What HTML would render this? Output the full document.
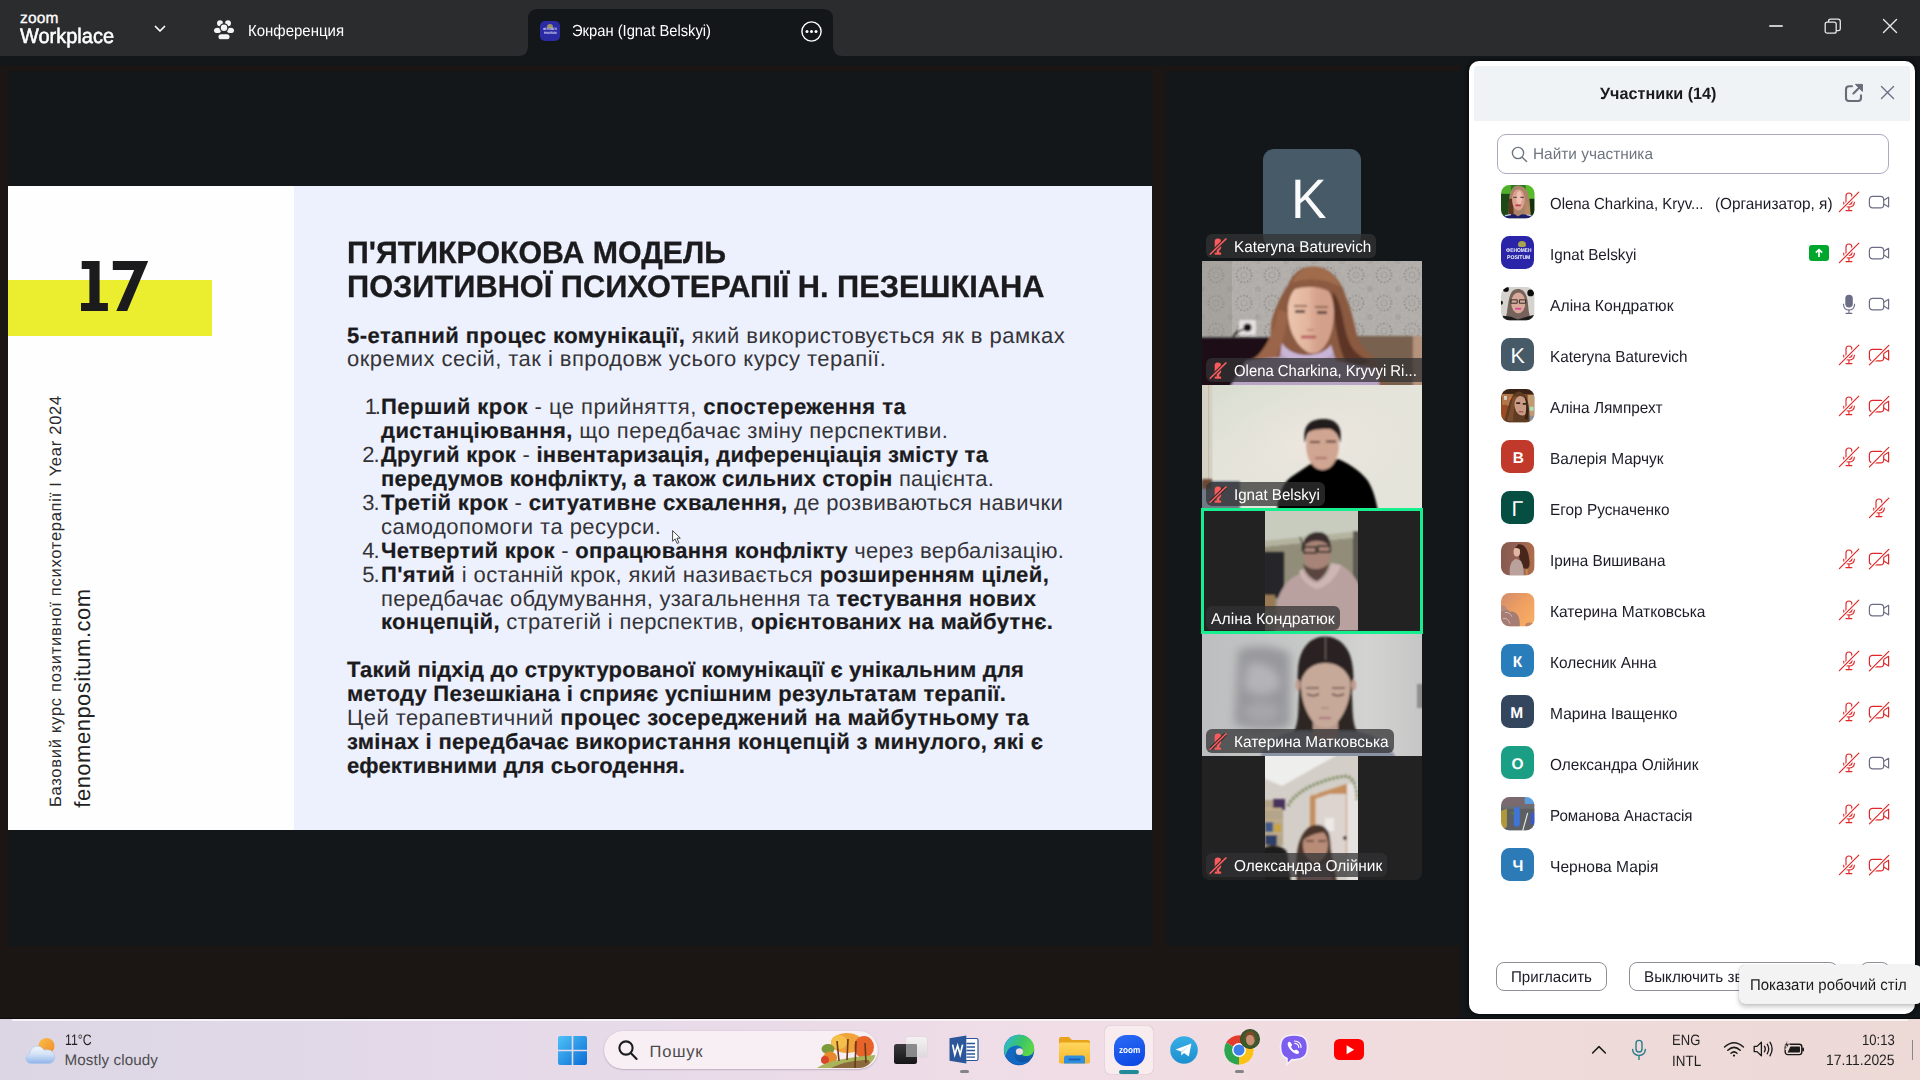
<!DOCTYPE html>
<html><head><meta charset="utf-8"><title>Zoom</title>
<style>
html,body{margin:0;padding:0;}
body{width:1920px;height:1080px;overflow:hidden;position:relative;background:#13171a;font-family:"Liberation Sans",sans-serif;}
.a{position:absolute;}
.t{position:absolute;white-space:nowrap;line-height:1;text-rendering:geometricPrecision;}
.t b{font-weight:bold;color:var(--bc,inherit);-webkit-text-stroke:var(--bs,0);}
svg{position:absolute;overflow:visible;}
</style></head><body>
<div class="a" style="left:0px;top:0px;width:1920px;height:56px;background:#2b2c2e;"></div>
<div class="a" style="left:0px;top:66px;width:1460px;height:953px;background:#1b1613;"></div>
<div class="a" style="left:8px;top:71px;width:1144px;height:875px;background:#13171a;"></div>
<div class="a" style="left:1166px;top:71px;width:294px;height:875px;background:#13171a;"></div>
<svg style="left:517.8px;top:9px" width="325" height="47" viewBox="0 0 325 47"><path d="M0 47 Q10 47 10 37 L10 10 Q10 0 20 0 L305 0 Q315 0 315 10 L315 37 Q315 47 325 47 Z" fill="#13171a"/></svg>
<svg style="left:154px;top:25px" width="12" height="9" viewBox="0 0 12 9"><path d="M1.5 1.5 L6 6 L10.5 1.5" fill="none" stroke="#fff" stroke-width="1.7" stroke-linecap="round" stroke-linejoin="round"/></svg>
<svg style="left:214px;top:20px" width="20" height="20" viewBox="0 0 20 20" fill="#f4f4f4">
<circle cx="6" cy="3.3" r="3"/><circle cx="14" cy="3.3" r="3"/>
<ellipse cx="3.5" cy="10.4" rx="3.5" ry="2.7"/><ellipse cx="16.5" cy="10.4" rx="3.5" ry="2.7"/>
<circle cx="10" cy="7.7" r="3.9" stroke="#2b2c2f" stroke-width="1.3"/>
<rect x="3.9" y="13.6" width="12.2" height="6.2" rx="3.1" stroke="#2b2c2f" stroke-width="1.1"/>
</svg>
<div class="a" style="left:540px;top:21px;width:20px;height:20px;border-radius:5px;background:#2b2aa5"></div>
<div class="a" style="left:547px;top:23.5px;width:6px;height:4.5px;border-radius:3px 3px 1px 1px;background:#9a9560"></div>
<svg style="left:800.4px;top:19.5px" width="23" height="23" viewBox="0 0 23 23"><circle cx="11.5" cy="11.5" r="9.6" fill="none" stroke="#fff" stroke-width="1.4"/><circle cx="7" cy="11.5" r="1.5" fill="#fff"/><circle cx="11.5" cy="11.5" r="1.5" fill="#fff"/><circle cx="16" cy="11.5" r="1.5" fill="#fff"/></svg>
<div class="a" style="left:1769px;top:25px;width:14px;height:1.9px;border-radius:1px;background:#c9c9c9"></div>
<svg style="left:1824px;top:18px" width="18" height="17" viewBox="0 0 18 17" fill="none" stroke="#e8e8e8" stroke-width="1.3"><rect x="1.2" y="4.2" width="11" height="11" rx="2"/><path d="M4.5 4 V3.2 Q4.5 1.2 6.5 1.2 H14 Q16.3 1.2 16.3 3.5 V10.8 Q16.3 12.6 14.6 12.6 H12.4"/></svg>
<svg style="left:1882px;top:18px" width="16" height="16" viewBox="0 0 16 16" stroke="#e8e8e8" stroke-width="1.4" stroke-linecap="round"><path d="M1.5 1.5 L14.5 14.5 M14.5 1.5 L1.5 14.5"/></svg>
<div class="a" style="left:8px;top:186px;width:286px;height:644px;background:#fefefe;"></div>
<div class="a" style="left:294px;top:186px;width:858px;height:644px;background:#edf0fd;"></div>
<div class="a" style="left:8px;top:280px;width:204px;height:56px;background:#ebed2f;"></div>
<svg style="left:0;top:0" width="300" height="400" viewBox="0 0 300 400" fill="#1b1b1d">
<path d="M81.7 261.1 H99.6 V303.1 H107.9 V310.9 H81 V303.1 H89.4 V269.1 H81.7 Z"/>
<path d="M112.8 261.1 H148.2 L127.2 310.9 H116.3 L134.2 270.1 H112.8 Z"/>
</svg>
<svg style="left:672px;top:530px" width="10" height="15" viewBox="0 0 10 15"><path d="M0.6 0.6 L0.6 11.2 L3.1 8.9 L5.1 13.4 L6.9 12.6 L4.9 8.2 L8.3 8.2 Z" fill="#fff" stroke="#333" stroke-width="0.9"/></svg>
<div class="a" style="left:1263px;top:149px;width:98px;height:98px;border-radius:11px;background:#465a68"></div>
<svg style="left:1202px;top:261px;" width="220" height="124" viewBox="0 0 220 124"><defs><filter id="b2" x="-10%" y="-10%" width="120%" height="120%"><feGaussianBlur stdDeviation="1"/></filter><clipPath id="c2"><rect x="0" y="0" width="220" height="124"/></clipPath></defs>
<filter id="nz2" x="0" y="0" width="100%" height="100%"><feTurbulence type="fractalNoise" baseFrequency="0.3" numOctaves="2" seed="7"/><feColorMatrix values="0 0 0 0 0.42  0 0 0 0 0.40  0 0 0 0 0.39  2.6 2.6 2.6 0 -3.55"/></filter>
<g clip-path="url(#c2)"><rect width="220" height="124" fill="#b4b1ad"/>
<pattern id="wp" width="28" height="28" patternUnits="userSpaceOnUse"><circle cx="14" cy="14" r="7.5" fill="none" stroke="#8d8986" stroke-width="2.2" stroke-dasharray="2 1.4"/><circle cx="14" cy="14" r="3" fill="none" stroke="#9a9693" stroke-width="1.2"/><circle cx="0" cy="0" r="3" fill="#a09c99"/><circle cx="28" cy="28" r="3" fill="#a09c99"/><circle cx="28" cy="0" r="3" fill="#a09c99"/><circle cx="0" cy="28" r="3" fill="#a09c99"/></pattern>
<rect width="220" height="78" fill="url(#wp)" opacity="0.7"/>
<rect width="220" height="78" filter="url(#nz2)" opacity="0.75"/>
<rect x="0" y="0" width="30" height="78" fill="#8f8b88" opacity="0.35"/>
<g filter="url(#b2)">
<rect x="37" y="59" width="17" height="15" rx="2" fill="#e4e2e0"/><circle cx="45.5" cy="66.5" r="4" fill="#141012"/><path d="M31 76 Q35 69 44 68" stroke="#141012" stroke-width="1.6" fill="none"/>
<rect x="-2" y="76.5" width="70" height="50" fill="#1a1113"/>
<rect x="150" y="75" width="75" height="52" fill="#78624f"/><rect x="211" y="75" width="12" height="52" fill="#b4927b"/>
<path d="M112 5.5 C98 5 90 14 86 24 C78 36 74 46 70 58 C68 68 70 76 66 84 C62 92 54 96 46 100 L40 126 L184 126 L174 98 C166 92 158 84 155 74 C152 62 150 50 144 36 C140 22 130 6 112 5.5Z" fill="#8b5a41"/>
<path d="M112 6 C124 6 134 14 138 26 C126 18 104 16 90 22 C94 12 102 6 112 6Z" fill="#a06c4c"/>
<path d="M130 30 C140 40 140 60 146 78 C150 90 158 96 168 100 L150 110 C138 98 132 64 130 30Z" fill="#5d3628"/>
<path d="M76 48 C72 72 64 88 50 100 L68 104 C80 90 84 70 86 52Z" fill="#9a6548"/>
<path d="M109 21 C94 21 86 34 86 50 C86 66 92 82 104 90 C108 93 114 93 118 90 C128 82 132 66 132 50 C132 34 124 21 109 21Z" fill="#d3a08b"/>
<linearGradient id="fc2" x1="0" x2="1"><stop offset="0" stop-color="#ecc6ae"/><stop offset="0.45" stop-color="#e2b49d"/><stop offset="0.75" stop-color="#d3a08b" stop-opacity="0"/></linearGradient><path d="M109 21 C94 21 86 34 86 50 C86 66 92 82 104 90 C108 93 114 93 118 90 C128 82 132 66 132 50 C132 34 124 21 109 21Z" fill="url(#fc2)"/>
<path d="M88 30 C94 18 124 16 132 34 C122 24 100 24 88 30Z" fill="#8b5a41"/>
<path d="M92 45 h13 M113 46 h13" stroke="#7a5444" stroke-width="1.4"/>
<path d="M93 50.5 h10 M115 51.5 h10" stroke="#4d3a36" stroke-width="2.6"/>
<path d="M105 69 h7" stroke="#b98572" stroke-width="1.6"/>
<path d="M99 76 h15" stroke="#b4545e" stroke-width="2.6"/>
<path d="M80 82 C90 98 118 98 129 84 L134 100 L174 108 L178 126 L28 126 L44 100 L78 96Z" fill="#b9a4c6"/>
<path d="M80 82 C90 98 118 98 129 84 L131 92 C118 104 90 104 79 92Z" fill="#c9b6d6"/>
</g></g></svg>
<svg style="left:1202px;top:385px;" width="220" height="124" viewBox="0 0 220 124"><defs><filter id="b3" x="-10%" y="-10%" width="120%" height="120%"><feGaussianBlur stdDeviation="1"/></filter><clipPath id="c3"><rect x="0" y="0" width="220" height="124"/></clipPath></defs>
<g clip-path="url(#c3)"><rect width="220" height="124" fill="#e5e4da"/>
<radialGradient id="g3" cx="0.5" cy="0.45" r="0.5"><stop offset="0" stop-color="#efe6e0"/><stop offset="1" stop-color="#e5e4da" stop-opacity="0"/></radialGradient>
<rect width="220" height="124" fill="url(#g3)"/>
<linearGradient id="g3b" x1="0" y1="0" x2="1" y2="1"><stop offset="0" stop-color="#d6dccf"/><stop offset="0.5" stop-color="#e5e4da" stop-opacity="0"/></linearGradient>
<rect width="220" height="124" fill="url(#g3b)"/>
<rect x="0" y="0" width="10.5" height="124" fill="#d5d2c3"/><rect x="6" y="0" width="1.2" height="100" fill="#c2bfb0"/>
<g filter="url(#b3)">
<rect x="-2" y="96" width="40" height="30" fill="#6f7a86"/><rect x="0" y="94" width="10" height="10" fill="#6b4a35"/>
<path d="M75 126 C77 106 82 96 92 90 L110 78 L136 74 C150 80 160 88 166 96 C172 106 174 116 176 126Z" fill="#040404"/>
<ellipse cx="120.5" cy="61" rx="16.3" ry="24" fill="#d0a591"/>
<path d="M103 58 C100 40 108 34 122 34 C136 34 141 44 138 58 C136 50 134 46 128 44 C118 44 110 44 106 48 C104 52 104 56 103 58Z" fill="#221e1f"/>
<path d="M108 57 h10 M124 56.5 h10" stroke="#5b4038" stroke-width="1.8"/>
<path d="M113 73 h12" stroke="#a8655e" stroke-width="1.6"/>
</g></g></svg>
<div class="a" style="left:1201px;top:508px;width:222px;height:126px;background:#222223;box-sizing:border-box;border:3.4px solid #17ef8e"></div>
<svg style="left:1265px;top:511.4px;" width="93" height="119.2" viewBox="0 0 93 119.2"><defs><filter id="b4" x="-10%" y="-10%" width="120%" height="120%"><feGaussianBlur stdDeviation="0.9"/></filter><clipPath id="c4"><rect x="0" y="0" width="93" height="119.2"/></clipPath></defs>
<g clip-path="url(#c4)"><rect width="93" height="120" fill="#918d78"/>
<g filter="url(#b4)">
<path d="M-2 -2 H95 V26 L-2 36Z" fill="#c8ccbf"/>
<path d="M-2 30 L95 20 V26 L-2 36Z" fill="#b4b39f"/>
<rect x="88" y="20" width="7" height="60" fill="#5b5a52"/>
<rect x="-2" y="41" width="21" height="46" fill="#28282a"/><rect x="-2" y="84" width="12" height="14" fill="#9a7a55"/>
<path d="M35 26 l3 8 l-1 6" stroke="#2d2d2d" stroke-width="1.2" fill="none"/>
<ellipse cx="52" cy="43" rx="13.5" ry="18" fill="#a78477"/>
<path d="M38 40 C36 26 46 20 54 21 C62 21 66 28 65 36 C60 28 46 28 40 34Z" fill="#3a2f2f"/>
<path d="M39 36 h12 v6 h-12z M53 35 h12 v6 h-12z" fill="none" stroke="#1f1c1c" stroke-width="1.3"/>
<path d="M38 58 L38 62 C28 64 18 72 12 90 L10 122 L95 122 L95 76 C90 64 82 58 76 54 L66 52 C64 62 58 68 52 70 C46 68 40 62 38 58Z" fill="#b9a1a0"/>
<path d="M38 58 C40 68 48 72 52 72 C58 70 64 62 66 52 L76 54 C72 66 62 76 52 78 C44 76 36 68 34 60Z" fill="#cdb6b4"/>
<path d="M38 52 C40 62 46 68 52 70 C58 66 62 60 64 52 C58 60 44 60 38 52Z" fill="#5a4540"/>
</g></g></svg>
<svg style="left:1202px;top:634px;" width="220" height="122" viewBox="0 0 220 122"><defs><filter id="b5" x="-10%" y="-10%" width="120%" height="120%"><feGaussianBlur stdDeviation="1.3"/></filter><clipPath id="c5"><rect x="0" y="0" width="220" height="122"/></clipPath></defs>
<filter id="b5x" x="-20%" y="-20%" width="140%" height="140%"><feGaussianBlur stdDeviation="5"/></filter>
<g clip-path="url(#c5)"><rect width="220" height="122" fill="#c6c7c7"/>
<linearGradient id="g5" x1="0" x2="1"><stop offset="0" stop-color="#bdbebf"/><stop offset="0.45" stop-color="#c6c7c7"/><stop offset="0.75" stop-color="#d3d3d2"/><stop offset="1" stop-color="#c6c6c6"/></linearGradient>
<rect width="220" height="122" fill="url(#g5)"/>
<g filter="url(#b5x)">
<path d="M36 16 C50 10 78 12 88 20 L88 92 C70 98 44 96 32 90Z" fill="#98989c"/>
<path d="M46 30 C62 26 78 36 78 52 C70 62 50 64 42 52Z" fill="#b4b4b8"/>
<ellipse cx="60" cy="78" rx="18" ry="10" fill="#a6a6aa"/>
</g>
<g filter="url(#b5)">
<rect x="215" y="50" width="8" height="24" fill="#8e8e8e"/>
<path d="M123 2.5 C105 3 97 18 96 36 C95 46 96 52 97 58 L150 58 C151 52 152 46 151 36 C150 18 141 3 123 2.5Z" fill="#2a2421"/>
<path d="M98 52 C95 70 99 88 90 101 L114 101 L108 70Z" fill="#2d2623"/>
<path d="M149 52 C152 70 148 88 157 101 L133 101 L139 70Z" fill="#2d2623"/>
<path d="M58 126 C60 108 76 100 96 97 L150 97 C172 100 190 108 194 126Z" fill="#8a93a3"/>
<rect x="111" y="88" width="25" height="18" fill="#b5988b"/>
<ellipse cx="96" cy="51" rx="2.6" ry="5.5" fill="#c09c8d"/><ellipse cx="151.5" cy="51" rx="2.6" ry="5.5" fill="#c09c8d"/>
<path d="M123.5 22 C110 23 99.5 33 99 49 C98.5 63 103 79 113 90 C117 95 130 95 134 90 C144 79 149 63 148.5 49 C148 33 137 23 123.5 22Z" fill="#c7a999"/>
<path d="M99 47 C100 30 112 21 123.5 21 C135 21 147 30 148.5 47 C144 34 134 29 123.5 29 C113 29 103 34 99 47Z" fill="#2a2421"/>
<path d="M123.5 3 V26" stroke="#7a6a64" stroke-width="0.9"/>
<path d="M105 60 q6 3.4 12 0 M130 60 q6 3.4 12 0" stroke="#5a463f" stroke-width="1.6" fill="none"/>
<path d="M104 54 h13 M130 54 h13" stroke="#6a544b" stroke-width="1.3"/>
<path d="M119 74 h8" stroke="#a98c80" stroke-width="1.6"/>
<path d="M117 84 h12" stroke="#a9777a" stroke-width="2.2"/>
</g></g></svg>
<div class="a" style="left:1202px;top:756px;width:220px;height:124px;background:#222223;border-radius:0 0 7px 7px"></div>
<svg style="left:1265px;top:756px;" width="93" height="124" viewBox="0 0 93 124"><defs><filter id="b6" x="-10%" y="-10%" width="120%" height="120%"><feGaussianBlur stdDeviation="0.8"/></filter><clipPath id="c6"><rect x="0" y="0" width="93" height="124"/></clipPath></defs>
<g clip-path="url(#c6)"><rect width="93" height="124" fill="#d3cec7"/>
<g filter="url(#b6)">
<path d="M-2 -2 H74 L17 30 L-2 22Z" fill="#eeeeed"/>
<path d="M45 40 L82 28 L82 100 L45 100Z" fill="#c58f5d"/>
<rect x="50.5" y="38" width="30.5" height="62" fill="#ddd4cf"/>
<path d="M45 41 L82 28 L82 32 L50 43Z" fill="#c58f5d"/>
<rect x="82" y="28" width="13" height="98" fill="#e6e2df"/>
<rect x="60" y="62" width="9" height="13" fill="#ece9e6"/>
<circle cx="80" cy="82" r="2" fill="#222"/>
<path d="M23 50 C30 34 60 22 82 20 C90 24 92 32 92 44" stroke="#7f8c63" stroke-width="3.2" fill="none" stroke-dasharray="2.5 1.6"/>
<rect x="-2" y="44" width="20" height="46" fill="#b3a48a"/>
<rect x="8" y="43" width="12" height="11" fill="#47325c"/>
<rect x="0" y="66" width="8" height="10" fill="#3f5a86"/><rect x="9" y="68" width="7" height="8" fill="#c9a33f"/>
<rect x="0" y="79" width="12" height="10" fill="#2d3f6b"/><rect x="0" y="52" width="17" height="2" fill="#c9b38f"/><rect x="0" y="64" width="17" height="1.6" fill="#c9b38f"/><rect x="0" y="77" width="17" height="1.6" fill="#c9b38f"/>
<path d="M-2 126 V92 C4 88 16 88 22 96 L26 126Z" fill="#1d1d1f"/>
<path d="M32 126 C30 100 32 78 46 70 C56 66 64 72 65 82 C66 96 68 110 72 126Z" fill="#49342c"/>
<ellipse cx="50.5" cy="89" rx="12.5" ry="17" fill="#b98c78"/>
<path d="M38 84 C40 72 52 68 62 76 C56 76 46 78 38 84Z" fill="#49342c"/>
<path d="M41 85 h8 M53 85 h8" stroke="#4e3730" stroke-width="1.6"/>
<path d="M40 104 C46 110 56 110 62 104 L68 126 L34 126Z" fill="#5b4a4a"/>
</g></g></svg>
<div class="a" style="left:1206px;top:233.5px;width:170px;height:24.5px;border-radius:6px;background:rgba(50,50,51,0.74)"></div>
<svg style="left:1206px;top:233.5px" width="24" height="24.5" viewBox="0 0 24 24.5"><g fill="#fd5a5b"><rect x="8.7" y="4.4" width="6.4" height="12" rx="3.1"/><rect x="10.7" y="16" width="2.5" height="3"/><rect x="8.7" y="18.6" width="6.4" height="2.1"/></g><path d="M4.6 19.8 L19.6 5.2" stroke="#2b2c2d" stroke-width="3.6"/><path d="M4.2 20.2 L20 4.9" stroke="#fd5a5b" stroke-width="1.5" stroke-linecap="round"/></svg>
<div class="a" style="left:1206px;top:357.5px;width:216px;height:24.5px;border-radius:6px 0 0 6px;background:rgba(50,50,51,0.74)"></div>
<svg style="left:1206px;top:357.5px" width="24" height="24.5" viewBox="0 0 24 24.5"><g fill="#fd5a5b"><rect x="8.7" y="4.4" width="6.4" height="12" rx="3.1"/><rect x="10.7" y="16" width="2.5" height="3"/><rect x="8.7" y="18.6" width="6.4" height="2.1"/></g><path d="M4.6 19.8 L19.6 5.2" stroke="#2b2c2d" stroke-width="3.6"/><path d="M4.2 20.2 L20 4.9" stroke="#fd5a5b" stroke-width="1.5" stroke-linecap="round"/></svg>
<div class="a" style="left:1206px;top:481.5px;width:119px;height:24.5px;border-radius:6px;background:rgba(50,50,51,0.74)"></div>
<svg style="left:1206px;top:481.5px" width="24" height="24.5" viewBox="0 0 24 24.5"><g fill="#fd5a5b"><rect x="8.7" y="4.4" width="6.4" height="12" rx="3.1"/><rect x="10.7" y="16" width="2.5" height="3"/><rect x="8.7" y="18.6" width="6.4" height="2.1"/></g><path d="M4.6 19.8 L19.6 5.2" stroke="#2b2c2d" stroke-width="3.6"/><path d="M4.2 20.2 L20 4.9" stroke="#fd5a5b" stroke-width="1.5" stroke-linecap="round"/></svg>
<div class="a" style="left:1206px;top:605.5px;width:133.5px;height:24.5px;border-radius:6px;background:rgba(50,50,51,0.74)"></div>
<div class="a" style="left:1206px;top:728.7px;width:188px;height:24.5px;border-radius:6px;background:rgba(50,50,51,0.74)"></div>
<svg style="left:1206px;top:728.7px" width="24" height="24.5" viewBox="0 0 24 24.5"><g fill="#fd5a5b"><rect x="8.7" y="4.4" width="6.4" height="12" rx="3.1"/><rect x="10.7" y="16" width="2.5" height="3"/><rect x="8.7" y="18.6" width="6.4" height="2.1"/></g><path d="M4.6 19.8 L19.6 5.2" stroke="#2b2c2d" stroke-width="3.6"/><path d="M4.2 20.2 L20 4.9" stroke="#fd5a5b" stroke-width="1.5" stroke-linecap="round"/></svg>
<div class="a" style="left:1206px;top:852.8px;width:180.7px;height:24.5px;border-radius:6px;background:rgba(50,50,51,0.74)"></div>
<svg style="left:1206px;top:852.8px" width="24" height="24.5" viewBox="0 0 24 24.5"><g fill="#fd5a5b"><rect x="8.7" y="4.4" width="6.4" height="12" rx="3.1"/><rect x="10.7" y="16" width="2.5" height="3"/><rect x="8.7" y="18.6" width="6.4" height="2.1"/></g><path d="M4.6 19.8 L19.6 5.2" stroke="#2b2c2d" stroke-width="3.6"/><path d="M4.2 20.2 L20 4.9" stroke="#fd5a5b" stroke-width="1.5" stroke-linecap="round"/></svg>
<div class="a" style="left:1469px;top:61px;width:446px;height:953px;border-radius:10px;background:#fff;box-shadow:0 0 4px 1px rgba(0,0,0,0.55)"></div>
<div class="a" style="left:1474px;top:66px;width:436px;height:55px;border-radius:3px 0 0 0;background:#eff3f6"></div>
<svg style="left:1844px;top:83px" width="20" height="20" viewBox="0 0 20 20" fill="none" stroke="#676d78" stroke-width="2.1" stroke-linecap="round" stroke-linejoin="round"><path d="M8 3.2 H5.2 Q2 3.2 2 6.4 V15 Q2 18 5 18 H14 Q17 18 17 15 V12.4"/><path d="M17.4 2.4 L9.4 10.4"/><path d="M11.8 1.4 H18.4 V8Z" fill="#676d78" stroke-width="1"/></svg>
<svg style="left:1880px;top:85px" width="15" height="15" viewBox="0 0 15 15" stroke="#6c6d86" stroke-width="1.4" stroke-linecap="round"><path d="M1.5 1.5 L13.5 13.5 M13.5 1.5 L1.5 13.5"/></svg>
<div class="a" style="left:1497px;top:134px;width:392px;height:39.5px;box-sizing:border-box;border:1.4px solid #abaac2;border-radius:9px;background:#fff"></div>
<svg style="left:1511px;top:146px" width="17" height="17" viewBox="0 0 17 17" fill="none" stroke="#6e7680" stroke-width="1.4" stroke-linecap="round"><circle cx="7" cy="7" r="5.6"/><path d="M11.2 11.2 L15.6 15.6"/></svg>
<svg style="left:1838px;top:191px" width="22" height="22" viewBox="0 0 22 22" fill="none" stroke="#e02828" stroke-width="1.15" stroke-linecap="round"><path d="M8 11 V5 Q8 2 10.95 2 Q13.9 2 13.9 5 V11 Q13.9 13.4 10.95 13.4 Q8 13.4 8 11Z"/><path d="M5.6 11.2 Q5.9 16 10.95 16 Q16 16 16.4 11.2"/><path d="M10.95 16 V19.4 M8 19.6 H13.9"/><path d="M1.2 20.8 L21 1" stroke="#fff" stroke-width="3.4" stroke-linecap="butt"/><path d="M1.4 20.6 L20.8 1.2" stroke-width="1.2"/></svg>
<svg style="left:1868px;top:190.7px" width="22" height="22" viewBox="0 0 22 22" fill="none" stroke="#6b6c85" stroke-width="1.2" stroke-linejoin="round"><rect x="1.4" y="5.3" width="14.3" height="11.6" rx="3.2"/><path d="M15.8 9.2 L20.6 6.3 V16 L15.8 13.1"/></svg>
<svg style="left:1838px;top:242px" width="22" height="22" viewBox="0 0 22 22" fill="none" stroke="#e02828" stroke-width="1.15" stroke-linecap="round"><path d="M8 11 V5 Q8 2 10.95 2 Q13.9 2 13.9 5 V11 Q13.9 13.4 10.95 13.4 Q8 13.4 8 11Z"/><path d="M5.6 11.2 Q5.9 16 10.95 16 Q16 16 16.4 11.2"/><path d="M10.95 16 V19.4 M8 19.6 H13.9"/><path d="M1.2 20.8 L21 1" stroke="#fff" stroke-width="3.4" stroke-linecap="butt"/><path d="M1.4 20.6 L20.8 1.2" stroke-width="1.2"/></svg>
<svg style="left:1868px;top:241.7px" width="22" height="22" viewBox="0 0 22 22" fill="none" stroke="#6b6c85" stroke-width="1.2" stroke-linejoin="round"><rect x="1.4" y="5.3" width="14.3" height="11.6" rx="3.2"/><path d="M15.8 9.2 L20.6 6.3 V16 L15.8 13.1"/></svg>
<svg style="left:1838px;top:293px" width="22" height="22" viewBox="0 0 22 22" fill="none" stroke="#6b6c85" stroke-width="1.15" stroke-linecap="round"><rect x="7.9" y="2.3" width="6.3" height="11.7" rx="3.15" fill="#6b6c85"/><path d="M5.5 11.2 Q5.8 17 10.95 17 Q16.2 17 16.6 11.2"/><path d="M10.95 17 V20 M8 20.3 H13.9"/></svg>
<svg style="left:1868px;top:292.7px" width="22" height="22" viewBox="0 0 22 22" fill="none" stroke="#6b6c85" stroke-width="1.2" stroke-linejoin="round"><rect x="1.4" y="5.3" width="14.3" height="11.6" rx="3.2"/><path d="M15.8 9.2 L20.6 6.3 V16 L15.8 13.1"/></svg>
<svg style="left:1838px;top:344px" width="22" height="22" viewBox="0 0 22 22" fill="none" stroke="#e02828" stroke-width="1.15" stroke-linecap="round"><path d="M8 11 V5 Q8 2 10.95 2 Q13.9 2 13.9 5 V11 Q13.9 13.4 10.95 13.4 Q8 13.4 8 11Z"/><path d="M5.6 11.2 Q5.9 16 10.95 16 Q16 16 16.4 11.2"/><path d="M10.95 16 V19.4 M8 19.6 H13.9"/><path d="M1.2 20.8 L21 1" stroke="#fff" stroke-width="3.4" stroke-linecap="butt"/><path d="M1.4 20.6 L20.8 1.2" stroke-width="1.2"/></svg>
<svg style="left:1868px;top:343.7px" width="22" height="22" viewBox="0 0 22 22" fill="none" stroke="#e02828" stroke-width="1.2" stroke-linejoin="round"><rect x="1.4" y="5.3" width="14.3" height="11.6" rx="3.2"/><path d="M15.8 9.2 L20.6 6.3 V16 L15.8 13.1"/><path d="M1.2 21 L21 1.2" stroke="#fff" stroke-width="3.4"/><path d="M1.4 20.8 L20.8 1.4" stroke-width="1.2" stroke-linecap="round"/></svg>
<svg style="left:1838px;top:395px" width="22" height="22" viewBox="0 0 22 22" fill="none" stroke="#e02828" stroke-width="1.15" stroke-linecap="round"><path d="M8 11 V5 Q8 2 10.95 2 Q13.9 2 13.9 5 V11 Q13.9 13.4 10.95 13.4 Q8 13.4 8 11Z"/><path d="M5.6 11.2 Q5.9 16 10.95 16 Q16 16 16.4 11.2"/><path d="M10.95 16 V19.4 M8 19.6 H13.9"/><path d="M1.2 20.8 L21 1" stroke="#fff" stroke-width="3.4" stroke-linecap="butt"/><path d="M1.4 20.6 L20.8 1.2" stroke-width="1.2"/></svg>
<svg style="left:1868px;top:394.7px" width="22" height="22" viewBox="0 0 22 22" fill="none" stroke="#e02828" stroke-width="1.2" stroke-linejoin="round"><rect x="1.4" y="5.3" width="14.3" height="11.6" rx="3.2"/><path d="M15.8 9.2 L20.6 6.3 V16 L15.8 13.1"/><path d="M1.2 21 L21 1.2" stroke="#fff" stroke-width="3.4"/><path d="M1.4 20.8 L20.8 1.4" stroke-width="1.2" stroke-linecap="round"/></svg>
<svg style="left:1838px;top:446px" width="22" height="22" viewBox="0 0 22 22" fill="none" stroke="#e02828" stroke-width="1.15" stroke-linecap="round"><path d="M8 11 V5 Q8 2 10.95 2 Q13.9 2 13.9 5 V11 Q13.9 13.4 10.95 13.4 Q8 13.4 8 11Z"/><path d="M5.6 11.2 Q5.9 16 10.95 16 Q16 16 16.4 11.2"/><path d="M10.95 16 V19.4 M8 19.6 H13.9"/><path d="M1.2 20.8 L21 1" stroke="#fff" stroke-width="3.4" stroke-linecap="butt"/><path d="M1.4 20.6 L20.8 1.2" stroke-width="1.2"/></svg>
<svg style="left:1868px;top:445.7px" width="22" height="22" viewBox="0 0 22 22" fill="none" stroke="#e02828" stroke-width="1.2" stroke-linejoin="round"><rect x="1.4" y="5.3" width="14.3" height="11.6" rx="3.2"/><path d="M15.8 9.2 L20.6 6.3 V16 L15.8 13.1"/><path d="M1.2 21 L21 1.2" stroke="#fff" stroke-width="3.4"/><path d="M1.4 20.8 L20.8 1.4" stroke-width="1.2" stroke-linecap="round"/></svg>
<svg style="left:1868px;top:497px" width="22" height="22" viewBox="0 0 22 22" fill="none" stroke="#e02828" stroke-width="1.15" stroke-linecap="round"><path d="M8 11 V5 Q8 2 10.95 2 Q13.9 2 13.9 5 V11 Q13.9 13.4 10.95 13.4 Q8 13.4 8 11Z"/><path d="M5.6 11.2 Q5.9 16 10.95 16 Q16 16 16.4 11.2"/><path d="M10.95 16 V19.4 M8 19.6 H13.9"/><path d="M1.2 20.8 L21 1" stroke="#fff" stroke-width="3.4" stroke-linecap="butt"/><path d="M1.4 20.6 L20.8 1.2" stroke-width="1.2"/></svg>
<svg style="left:1838px;top:548px" width="22" height="22" viewBox="0 0 22 22" fill="none" stroke="#e02828" stroke-width="1.15" stroke-linecap="round"><path d="M8 11 V5 Q8 2 10.95 2 Q13.9 2 13.9 5 V11 Q13.9 13.4 10.95 13.4 Q8 13.4 8 11Z"/><path d="M5.6 11.2 Q5.9 16 10.95 16 Q16 16 16.4 11.2"/><path d="M10.95 16 V19.4 M8 19.6 H13.9"/><path d="M1.2 20.8 L21 1" stroke="#fff" stroke-width="3.4" stroke-linecap="butt"/><path d="M1.4 20.6 L20.8 1.2" stroke-width="1.2"/></svg>
<svg style="left:1868px;top:547.7px" width="22" height="22" viewBox="0 0 22 22" fill="none" stroke="#e02828" stroke-width="1.2" stroke-linejoin="round"><rect x="1.4" y="5.3" width="14.3" height="11.6" rx="3.2"/><path d="M15.8 9.2 L20.6 6.3 V16 L15.8 13.1"/><path d="M1.2 21 L21 1.2" stroke="#fff" stroke-width="3.4"/><path d="M1.4 20.8 L20.8 1.4" stroke-width="1.2" stroke-linecap="round"/></svg>
<svg style="left:1838px;top:599px" width="22" height="22" viewBox="0 0 22 22" fill="none" stroke="#e02828" stroke-width="1.15" stroke-linecap="round"><path d="M8 11 V5 Q8 2 10.95 2 Q13.9 2 13.9 5 V11 Q13.9 13.4 10.95 13.4 Q8 13.4 8 11Z"/><path d="M5.6 11.2 Q5.9 16 10.95 16 Q16 16 16.4 11.2"/><path d="M10.95 16 V19.4 M8 19.6 H13.9"/><path d="M1.2 20.8 L21 1" stroke="#fff" stroke-width="3.4" stroke-linecap="butt"/><path d="M1.4 20.6 L20.8 1.2" stroke-width="1.2"/></svg>
<svg style="left:1868px;top:598.7px" width="22" height="22" viewBox="0 0 22 22" fill="none" stroke="#6b6c85" stroke-width="1.2" stroke-linejoin="round"><rect x="1.4" y="5.3" width="14.3" height="11.6" rx="3.2"/><path d="M15.8 9.2 L20.6 6.3 V16 L15.8 13.1"/></svg>
<svg style="left:1838px;top:650px" width="22" height="22" viewBox="0 0 22 22" fill="none" stroke="#e02828" stroke-width="1.15" stroke-linecap="round"><path d="M8 11 V5 Q8 2 10.95 2 Q13.9 2 13.9 5 V11 Q13.9 13.4 10.95 13.4 Q8 13.4 8 11Z"/><path d="M5.6 11.2 Q5.9 16 10.95 16 Q16 16 16.4 11.2"/><path d="M10.95 16 V19.4 M8 19.6 H13.9"/><path d="M1.2 20.8 L21 1" stroke="#fff" stroke-width="3.4" stroke-linecap="butt"/><path d="M1.4 20.6 L20.8 1.2" stroke-width="1.2"/></svg>
<svg style="left:1868px;top:649.7px" width="22" height="22" viewBox="0 0 22 22" fill="none" stroke="#e02828" stroke-width="1.2" stroke-linejoin="round"><rect x="1.4" y="5.3" width="14.3" height="11.6" rx="3.2"/><path d="M15.8 9.2 L20.6 6.3 V16 L15.8 13.1"/><path d="M1.2 21 L21 1.2" stroke="#fff" stroke-width="3.4"/><path d="M1.4 20.8 L20.8 1.4" stroke-width="1.2" stroke-linecap="round"/></svg>
<svg style="left:1838px;top:701px" width="22" height="22" viewBox="0 0 22 22" fill="none" stroke="#e02828" stroke-width="1.15" stroke-linecap="round"><path d="M8 11 V5 Q8 2 10.95 2 Q13.9 2 13.9 5 V11 Q13.9 13.4 10.95 13.4 Q8 13.4 8 11Z"/><path d="M5.6 11.2 Q5.9 16 10.95 16 Q16 16 16.4 11.2"/><path d="M10.95 16 V19.4 M8 19.6 H13.9"/><path d="M1.2 20.8 L21 1" stroke="#fff" stroke-width="3.4" stroke-linecap="butt"/><path d="M1.4 20.6 L20.8 1.2" stroke-width="1.2"/></svg>
<svg style="left:1868px;top:700.7px" width="22" height="22" viewBox="0 0 22 22" fill="none" stroke="#e02828" stroke-width="1.2" stroke-linejoin="round"><rect x="1.4" y="5.3" width="14.3" height="11.6" rx="3.2"/><path d="M15.8 9.2 L20.6 6.3 V16 L15.8 13.1"/><path d="M1.2 21 L21 1.2" stroke="#fff" stroke-width="3.4"/><path d="M1.4 20.8 L20.8 1.4" stroke-width="1.2" stroke-linecap="round"/></svg>
<svg style="left:1838px;top:752px" width="22" height="22" viewBox="0 0 22 22" fill="none" stroke="#e02828" stroke-width="1.15" stroke-linecap="round"><path d="M8 11 V5 Q8 2 10.95 2 Q13.9 2 13.9 5 V11 Q13.9 13.4 10.95 13.4 Q8 13.4 8 11Z"/><path d="M5.6 11.2 Q5.9 16 10.95 16 Q16 16 16.4 11.2"/><path d="M10.95 16 V19.4 M8 19.6 H13.9"/><path d="M1.2 20.8 L21 1" stroke="#fff" stroke-width="3.4" stroke-linecap="butt"/><path d="M1.4 20.6 L20.8 1.2" stroke-width="1.2"/></svg>
<svg style="left:1868px;top:751.7px" width="22" height="22" viewBox="0 0 22 22" fill="none" stroke="#6b6c85" stroke-width="1.2" stroke-linejoin="round"><rect x="1.4" y="5.3" width="14.3" height="11.6" rx="3.2"/><path d="M15.8 9.2 L20.6 6.3 V16 L15.8 13.1"/></svg>
<svg style="left:1838px;top:803px" width="22" height="22" viewBox="0 0 22 22" fill="none" stroke="#e02828" stroke-width="1.15" stroke-linecap="round"><path d="M8 11 V5 Q8 2 10.95 2 Q13.9 2 13.9 5 V11 Q13.9 13.4 10.95 13.4 Q8 13.4 8 11Z"/><path d="M5.6 11.2 Q5.9 16 10.95 16 Q16 16 16.4 11.2"/><path d="M10.95 16 V19.4 M8 19.6 H13.9"/><path d="M1.2 20.8 L21 1" stroke="#fff" stroke-width="3.4" stroke-linecap="butt"/><path d="M1.4 20.6 L20.8 1.2" stroke-width="1.2"/></svg>
<svg style="left:1868px;top:802.7px" width="22" height="22" viewBox="0 0 22 22" fill="none" stroke="#e02828" stroke-width="1.2" stroke-linejoin="round"><rect x="1.4" y="5.3" width="14.3" height="11.6" rx="3.2"/><path d="M15.8 9.2 L20.6 6.3 V16 L15.8 13.1"/><path d="M1.2 21 L21 1.2" stroke="#fff" stroke-width="3.4"/><path d="M1.4 20.8 L20.8 1.4" stroke-width="1.2" stroke-linecap="round"/></svg>
<svg style="left:1838px;top:854px" width="22" height="22" viewBox="0 0 22 22" fill="none" stroke="#e02828" stroke-width="1.15" stroke-linecap="round"><path d="M8 11 V5 Q8 2 10.95 2 Q13.9 2 13.9 5 V11 Q13.9 13.4 10.95 13.4 Q8 13.4 8 11Z"/><path d="M5.6 11.2 Q5.9 16 10.95 16 Q16 16 16.4 11.2"/><path d="M10.95 16 V19.4 M8 19.6 H13.9"/><path d="M1.2 20.8 L21 1" stroke="#fff" stroke-width="3.4" stroke-linecap="butt"/><path d="M1.4 20.6 L20.8 1.2" stroke-width="1.2"/></svg>
<svg style="left:1868px;top:853.7px" width="22" height="22" viewBox="0 0 22 22" fill="none" stroke="#e02828" stroke-width="1.2" stroke-linejoin="round"><rect x="1.4" y="5.3" width="14.3" height="11.6" rx="3.2"/><path d="M15.8 9.2 L20.6 6.3 V16 L15.8 13.1"/><path d="M1.2 21 L21 1.2" stroke="#fff" stroke-width="3.4"/><path d="M1.4 20.8 L20.8 1.4" stroke-width="1.2" stroke-linecap="round"/></svg>
<div class="a" style="left:1809px;top:245px;width:20px;height:15.5px;border-radius:3px;background:#00a72c"></div>
<svg style="left:1814px;top:248px" width="10" height="10" viewBox="0 0 10 10" fill="none" stroke="#fff" stroke-width="1.7"><path d="M5 9 V2 M1.8 4.6 L5 1.6 L8.2 4.6"/></svg>
<svg style="left:1500.7px;top:184.7px" width="33.6" height="33.6" viewBox="0 0 34 34"><defs><clipPath id="av0"><rect width="34" height="34" rx="8.6"/></clipPath><filter id="avb0"><feGaussianBlur stdDeviation="0.7"/></filter></defs><g clip-path="url(#av0)"><g filter="url(#avb0)"><rect width="34" height="34" fill="#2f7a22"/><rect x="0" y="0" width="10" height="9" fill="#4fae2c"/><rect x="0" y="9" width="9" height="25" fill="#1c4a17"/><rect x="25" y="0" width="9" height="14" fill="#58bc2b"/><rect x="27" y="14" width="7" height="20" fill="#12300f"/><path d="M17 0.5 C9 1 8 12 8 22 L7.5 32 H30 L29.5 22 C29 10 27 1 17 0.5Z" fill="#a98468"/><path d="M8 14 C8 22 7.5 28 8 32 L13 32 L12 14Z" fill="#5e3520"/><path d="M25 14 C27 20 30 26 30 31 L24 31Z" fill="#b88c62"/><ellipse cx="17.6" cy="15" rx="6.4" ry="10.8" fill="#dc9f90"/><ellipse cx="18.4" cy="13" rx="3" ry="7" fill="#ecbfb0"/><path d="M12.4 12.6 h3.6 M19.6 12.6 h3.6" stroke="#6a4a40" stroke-width="1.2"/><path d="M14.6 20.6 h5.4" stroke="#b8414b" stroke-width="1.7"/><path d="M2 34 L5 30.6 L14 29.6 L17 32 L21 29.6 L30 30.4 L33 34Z" fill="#1c1d68"/><path d="M4 31 L10 30 M26 30 L31 31.4" stroke="#c4cbe6" stroke-width="1.2"/></g></g></svg>
<div class="a" style="left:1500.7px;top:235.7px;width:33.6px;height:33.6px;border-radius:8.5px;background:#2a25a8"></div>
<div class="a" style="left:1517.5px;top:240.5px;width:8px;height:6.5px;border-radius:4px 4px 2px 2px;background:#a9a24e"></div>
<svg style="left:1500.7px;top:286.7px" width="33.6" height="33.6" viewBox="0 0 34 34"><defs><clipPath id="av2"><rect width="34" height="34" rx="8.6"/></clipPath><filter id="avb2"><feGaussianBlur stdDeviation="0.7"/></filter></defs><g clip-path="url(#av2)"><g filter="url(#avb2)"><rect width="34" height="34" fill="#d6d3ce"/><circle cx="5" cy="2" r="3" fill="#111"/><circle cx="30" cy="6" r="3.4" fill="#111"/><circle cx="0" cy="16" r="2" fill="#111"/><path d="M17 2 C8 2 8 14 6 26 L4 34 H30 L28 24 C27 12 26 2 17 2Z" fill="#74625a"/><ellipse cx="17.5" cy="16" rx="7.2" ry="10.5" fill="#d9a999"/><path d="M10 13 h6.4 v3.4 h-6.4z M18.6 13 h6.4 v3.4 h-6.4z" fill="none" stroke="#2b2b2b" stroke-width="1"/><path d="M14.5 22 h6" stroke="#e23f9a" stroke-width="1.7"/><path d="M0 34 L2 29 L10 30 L17 33 L26 30 L34 28 V34Z" fill="#1c1a1c"/></g></g></svg>
<div class="a" style="left:1500.7px;top:337.7px;width:33.6px;height:33.6px;border-radius:8.5px;background:#465a68"></div>
<svg style="left:1500.7px;top:388.7px" width="33.6" height="33.6" viewBox="0 0 34 34"><defs><clipPath id="av4"><rect width="34" height="34" rx="8.6"/></clipPath><filter id="avb4"><feGaussianBlur stdDeviation="0.7"/></filter></defs><g clip-path="url(#av4)"><g filter="url(#avb4)"><rect width="34" height="34" fill="#7a4a2a"/><rect x="0" y="0" width="34" height="5" fill="#3a2414"/><rect x="1" y="5" width="11" height="12" fill="#b0764a"/><rect x="3" y="7" width="3" height="4" fill="#d8d0c0"/><rect x="8" y="8" width="3" height="3" fill="#e07a3a"/><rect x="27" y="6" width="7" height="22" fill="#c09a70"/><rect x="29" y="18" width="4" height="4" fill="#a8e0c0"/><rect x="28" y="27" width="6" height="7" fill="#8a8e98"/><rect x="0" y="16" width="6" height="14" fill="#9a4a22"/><path d="M19 2.5 C10 3 8 16 4 30 L2 34 H29 C29 22 29 6 19 2.5Z" fill="#5e3a22"/><path d="M12 8 C10 16 9 24 6 32 L12 33 C13 24 14 14 16 7Z" fill="#7a4e2e"/><ellipse cx="20.4" cy="17" rx="6.6" ry="10" fill="#c99a84" transform="rotate(-10 20.4 17)"/><path d="M15.4 14.2 h4 M22 15 h3.6" stroke="#3a241c" stroke-width="1.8"/><path d="M18 23 h4.6" stroke="#a8505a" stroke-width="1.3"/><path d="M25 8 C28 14 28 24 27 31 L24 30 C26 22 26 14 24 9Z" fill="#3a2216"/></g></g></svg>
<div class="a" style="left:1500.7px;top:439.7px;width:33.6px;height:33.6px;border-radius:8.5px;background:#c0392b"></div>
<div class="a" style="left:1500.7px;top:490.7px;width:33.6px;height:33.6px;border-radius:8.5px;background:#064e42"></div>
<svg style="left:1500.7px;top:541.7px" width="33.6" height="33.6" viewBox="0 0 34 34"><defs><clipPath id="av7"><rect width="34" height="34" rx="8.6"/></clipPath><filter id="avb7"><feGaussianBlur stdDeviation="0.7"/></filter></defs><g clip-path="url(#av7)"><g filter="url(#avb7)"><linearGradient id="a7" x1="0" x2="1"><stop offset="0" stop-color="#87594f"/><stop offset="0.6" stop-color="#9a6456"/><stop offset="1" stop-color="#b06e48"/></linearGradient><rect width="34" height="34" fill="url(#a7)"/><path d="M17 2.5 C22 1 27 6 28 14 C29 20 30 24 27 27 C24 28 21 26 20 22 L18 14 L13 9Z" fill="#47281c"/><ellipse cx="16" cy="10" rx="3.3" ry="4.6" fill="#e2b5a4"/><path d="M14 6 C16 3 20 4 20 8 C18 6 16 6 14 6Z" fill="#47281c"/><path d="M9 34 C8 25 10 19 15 17 L20 19 C23 24 23 30 23 34Z" fill="#b9a29c"/><rect x="25" y="27" width="2" height="7" fill="#c88a4a"/></g></g></svg>
<svg style="left:1500.7px;top:592.7px" width="33.6" height="33.6" viewBox="0 0 34 34"><defs><clipPath id="av8"><rect width="34" height="34" rx="8.6"/></clipPath><filter id="avb8"><feGaussianBlur stdDeviation="0.7"/></filter></defs><g clip-path="url(#av8)"><g filter="url(#avb8)"><linearGradient id="a8" x1="0" y1="0" x2="1" y2="1"><stop offset="0" stop-color="#d18b6c"/><stop offset="0.5" stop-color="#f0a062"/><stop offset="1" stop-color="#f8b066"/></linearGradient><rect width="34" height="34" fill="url(#a8)"/><path d="M0 18 C3 15 7 16 9 19 C13 18 17 21 18 25 C19.5 29 19 32 19 34 H0Z" fill="#a57d75"/><path d="M0 13 C3 12 6 14 6 17 L0 19Z" fill="#b98a7c"/><path d="M4 20 C7 19 10 21 11 24 M2 26 C5 25 8 27 9 31" stroke="#dcc0b4" stroke-width="0.9" fill="none"/><ellipse cx="29" cy="32.5" rx="4.5" ry="2.6" fill="#bf8468"/></g></g></svg>
<div class="a" style="left:1500.7px;top:643.7px;width:33.6px;height:33.6px;border-radius:8.5px;background:#2a7dbb"></div>
<div class="a" style="left:1500.7px;top:694.7px;width:33.6px;height:33.6px;border-radius:8.5px;background:#34465d"></div>
<div class="a" style="left:1500.7px;top:745.7px;width:33.6px;height:33.6px;border-radius:8.5px;background:#1a9e84"></div>
<svg style="left:1500.7px;top:796.7px" width="33.6" height="33.6" viewBox="0 0 34 34"><defs><clipPath id="av12"><rect width="34" height="34" rx="8.6"/></clipPath><filter id="avb12"><feGaussianBlur stdDeviation="0.7"/></filter></defs><g clip-path="url(#av12)"><g filter="url(#avb12)"><rect width="34" height="34" fill="#6b6e72"/><rect x="0" y="0" width="34" height="9" fill="#7a6a70"/><rect x="24" y="0" width="10" height="7" fill="#5aa0e0"/><path d="M0 12 L34 12 L34 34 L0 34Z" fill="#5c5f63"/><path d="M0 14 L6 12 L6 30 L0 34Z" fill="#b0983a"/><path d="M8 16 L20 14 L16 20Z" fill="#5a7a3a"/><rect x="13" y="10" width="6" height="20" rx="2.5" fill="#3f74d8"/><path d="M22 34 L27 16" stroke="#e8e8e8" stroke-width="1.2"/><rect x="30" y="16" width="4" height="12" fill="#3a5ac8"/></g></g></svg>
<div class="a" style="left:1500.7px;top:847.7px;width:33.6px;height:33.6px;border-radius:8.5px;background:#2d7bb6"></div>
<div class="a" style="left:1496px;top:962.3px;width:111px;height:28.6px;box-sizing:border-box;border:1.2px solid #8e8e98;border-radius:8px;background:#fff"></div>
<div class="a" style="left:1629px;top:962.3px;width:209px;height:28.6px;box-sizing:border-box;border:1.2px solid #8e8e98;border-radius:8px;background:#fff"></div>
<div class="a" style="left:1860px;top:962.3px;width:30px;height:28.6px;box-sizing:border-box;border:1.2px solid #8e8e98;border-radius:8px;background:#fff"></div>
<div class="a" style="left:1739px;top:965px;width:182.5px;height:39.3px;border-radius:6px;background:#f3f3f3;box-shadow:0 3px 5px rgba(0,0,0,0.22), 0 0 1px rgba(0,0,0,0.3)"></div>
<div class="a" style="left:0;top:1019px;width:1920px;height:61px;background:linear-gradient(90deg,#dcd6e4 0%,#e3d9e9 22%,#eadbe8 40%,#f0dde6 55%,#f0dcde 70%,#eedad8 85%,#edd9d6 100%)"></div>
<div class="a" style="left:0;top:1018px;width:1920px;height:1px;background:#0b0b0c"></div>
<div class="a" style="left:12px;top:1019px;width:1896px;height:1.6px;background:#f7f2f4;opacity:0.95"></div>
<svg style="left:24px;top:1036px" width="33" height="30" viewBox="0 0 33 30">
<defs><linearGradient id="wc" x1="0" y1="0" x2="0" y2="1"><stop offset="0" stop-color="#f2f6fc"/><stop offset="0.45" stop-color="#d5e3f7"/><stop offset="1" stop-color="#8fb4ea"/></linearGradient>
<linearGradient id="ws" x1="0" y1="0" x2="1" y2="1"><stop offset="0" stop-color="#fbc04a"/><stop offset="1" stop-color="#f08a2a"/></linearGradient></defs>
<circle cx="22.5" cy="10" r="8" fill="url(#ws)"/>
<path d="M7.5 27.5 C1 27.5 -0.5 19 6 17.2 C6 9.5 17 7.5 20 14.2 C26 12.5 31 16 30.6 21.5 C30.4 25.5 27.5 27.5 24 27.5Z" fill="url(#wc)" stroke="#a9c4ec" stroke-width="0.6"/>
</svg>
<svg style="left:558px;top:1036px" width="29" height="29" viewBox="0 0 29 29"><defs><linearGradient id="wl" x1="0" y1="0" x2="1" y2="1"><stop offset="0" stop-color="#4fc3f7"/><stop offset="1" stop-color="#0a6cd6"/></linearGradient></defs>
<path d="M2 0 H13.7 V13.7 H0 V2 Q0 0 2 0Z M15.3 0 H27 Q29 0 29 2 V13.7 H15.3Z M0 15.3 H13.7 V29 H2 Q0 29 0 27Z M15.3 15.3 H29 V27 Q29 29 27 29 H15.3Z" fill="url(#wl)"/></svg>
<div class="a" style="left:604px;top:1031px;width:273.5px;height:38px;border-radius:19px;background:#f8eff5;box-shadow:0 0.5px 1.5px rgba(90,60,90,0.45)"></div>
<svg style="left:617px;top:1039px" width="22" height="22" viewBox="0 0 22 22" fill="none" stroke="#1d1d1d" stroke-width="2.1" stroke-linecap="round"><circle cx="9" cy="9" r="6.6"/><path d="M14 14.2 L19.6 20"/></svg>
<svg style="left:817px;top:1033px" width="59" height="35" viewBox="0 0 59 35"><defs><clipPath id="pl"><path d="M0 0 H41.5 A17.5 17.5 0 0 1 41.5 35 H0Z"/></clipPath><filter id="plb"><feGaussianBlur stdDeviation="0.6"/></filter></defs>
<g clip-path="url(#pl)" filter="url(#plb)">
<ellipse cx="30" cy="10" rx="16" ry="10" fill="#f0a23a"/><ellipse cx="47" cy="14" rx="10" ry="11" fill="#e8632a"/><ellipse cx="22" cy="9" rx="8" ry="7" fill="#f4c04a"/>
<ellipse cx="11" cy="16" rx="6.5" ry="5" fill="#7d9a3a"/><ellipse cx="13" cy="25" rx="7" ry="6.5" fill="#e88a2a"/><ellipse cx="8" cy="27" rx="4" ry="4" fill="#d8452a"/>
<path d="M0 35 C10 28 30 24 59 22 V35Z" fill="#a9b45a"/><path d="M14 35 C26 29 40 27 52 27 L54 35Z" fill="#8a6a3a"/>
<path d="M22 28 L20 8 M30 27 L31 6 M38 35 L39 8 M49 30 L48 10" stroke="#6a3a1c" stroke-width="1.6"/>
</g></svg>
<div class="a" style="left:906px;top:1036.5px;width:21px;height:20px;border-radius:2.5px;background:linear-gradient(180deg,#f4f2f3,#dcdadb);box-shadow:0 0 1px rgba(0,0,0,0.25)"></div>
<div class="a" style="left:894px;top:1043.5px;width:23px;height:20.5px;border-radius:2.5px;background:linear-gradient(180deg,#3a3a3c,#151517)"></div>
<div class="a" style="left:906px;top:1043.5px;width:11px;height:13px;background:#9a999b;opacity:0.85"></div>
<svg style="left:949px;top:1035px" width="30" height="29" viewBox="0 0 30 29"><rect x="12" y="3.5" width="17" height="22" rx="1.5" fill="#fff" stroke="#2b579a" stroke-width="1.2"/>
<path d="M17.5 8.5 H26 M17.5 12 H26 M17.5 15.5 H26 M17.5 19 H26 M17.5 22.2 H26" stroke="#2b579a" stroke-width="1.3"/>
<path d="M0.5 3.2 L17.3 0.4 V28.6 L0.5 25.8Z" fill="#2b579a"/>
<path d="M3.6 9.6 L5.8 19.6 L8.6 10.6 L11.2 19.6 L13.6 9.6" fill="none" stroke="#fff" stroke-width="1.7" stroke-linejoin="miter"/></svg>
<div class="a" style="left:960px;top:1070px;width:8.5px;height:3px;border-radius:1.5px;background:#858387"></div>
<svg style="left:1003px;top:1034px" width="32" height="32" viewBox="0 0 32 32"><defs>
<linearGradient id="e1" x1="0" y1="0" x2="1" y2="0.4"><stop offset="0" stop-color="#2bb6e6"/><stop offset="0.6" stop-color="#39c36a"/><stop offset="1" stop-color="#5bd64a"/></linearGradient>
<linearGradient id="e2" x1="0" y1="0" x2="0" y2="1"><stop offset="0" stop-color="#1b8fd8"/><stop offset="1" stop-color="#0c4a9a"/></linearGradient></defs>
<circle cx="16" cy="16" r="15.2" fill="url(#e2)"/>
<path d="M1 14 C3 4 12 0 18 1 C27 2 32 9 31 16 C30.5 20 27 22 23 22 C19 22 18 20 19 18.6 C20.5 16.6 20 13 16 12 C10 10.6 4 14 3 22 C1.5 19 0.6 17 1 14Z" fill="url(#e1)"/>
<path d="M3 22 C4 14 10 10.6 16 12 C11 13 9 18 11.5 23 C14 28 21 30 27.5 26 C22 33 8 33 3 22Z" fill="#1368c4"/>
<ellipse cx="16.5" cy="17.6" rx="3.6" ry="3.4" fill="#efdce2"/></svg>
<svg style="left:1059px;top:1036px" width="31" height="28" viewBox="0 0 31 28"><defs><linearGradient id="fx" x1="0" y1="0" x2="0" y2="1"><stop offset="0" stop-color="#ffd75e"/><stop offset="1" stop-color="#f6b62a"/></linearGradient></defs>
<path d="M0 3 Q0 1 2 1 H10 L13 4 H29 Q31 4 31 6 V10 H0Z" fill="#e8a21c"/>
<rect x="0" y="6.5" width="31" height="21" rx="1.8" fill="url(#fx)"/>
<path d="M5 27.5 V22 Q5 19.6 7.4 19.6 H23.6 Q26 19.6 26 22 V27.5Z" fill="#2f8ee0"/><rect x="9.5" y="22.6" width="12" height="1.8" rx="0.9" fill="#1a5fb0"/></svg>
<div class="a" style="left:1105px;top:1026px;width:48px;height:48px;border-radius:5px;background:#f9ecef;box-shadow:0 0 1px rgba(120,90,100,0.5)"></div>
<div class="a" style="left:1114px;top:1035px;width:30.5px;height:30.5px;border-radius:12px;background:linear-gradient(160deg,#2a6cf6,#0b45e0)"></div>
<div class="a" style="left:1119px;top:1070px;width:20px;height:3.6px;border-radius:2px;background:#1f8a99"></div>
<svg style="left:1170px;top:1036px" width="28" height="28" viewBox="0 0 28 28"><defs><linearGradient id="tg" x1="0" y1="0" x2="0" y2="1"><stop offset="0" stop-color="#38aee6"/><stop offset="1" stop-color="#1c8fcf"/></linearGradient></defs><circle cx="14" cy="14" r="13.8" fill="url(#tg)"/>
<path d="M5.5 13.6 L21.4 7.4 L18.8 20.6 L14 17 L11.4 19.6 L11 15.6Z" fill="#fff"/><path d="M11 15.6 L19 9.6 L12.4 16.6 L11.4 19.6Z" fill="#c6e3f4"/></svg>
<svg style="left:1224px;top:1029px" width="38" height="37" viewBox="0 0 38 37">
<circle cx="15" cy="21" r="14.8" fill="#fff"/>
<path d="M15 21 L2.2 13.6 A14.8 14.8 0 0 1 27.8 13.6Z" fill="#e33b2e"/>
<path d="M15 21 L27.8 13.6 A14.8 14.8 0 0 1 15 35.8Z" fill="#fbc116"/>
<path d="M15 21 L15 35.8 A14.8 14.8 0 0 1 2.2 13.6Z" fill="#2da44e"/>
<circle cx="15" cy="21" r="6.9" fill="#fff"/><circle cx="15" cy="21" r="5.5" fill="#3c7fe8"/>
<circle cx="26" cy="10" r="10" fill="#4a3a2c"/><circle cx="26" cy="10" r="9.4" fill="#3a5a2a"/><ellipse cx="26.4" cy="10.4" rx="4.4" ry="6" fill="#c98f72"/><path d="M20.5 12 C20 4 24 2 27 2.6 C31 3 32 8 31.6 14 C30 8 29 6 26 6 C23 6 22 8 20.5 12Z" fill="#7a4a2a"/></svg>
<div class="a" style="left:1235px;top:1070px;width:8.5px;height:3px;border-radius:1.5px;background:#858387"></div>
<svg style="left:1279px;top:1034px" width="30" height="32" viewBox="0 0 30 32"><path d="M15 1 C5 1 1.5 5 1.5 13 C1.5 19 3.5 23 8 24.6 V30.4 L13 25.6 C24 26.4 28.5 22 28.5 13 C28.5 5 25 1 15 1Z" fill="#7d5cf0" stroke="#f6f0fb" stroke-width="1.6"/>
<path d="M9.6 8 C8 9 8.4 11.6 10.6 14.8 C13 18 16.4 20.4 18.6 20 C20 19.6 20.6 18 19.6 17.2 L17.6 15.8 C16.6 15.4 16 16.4 15.4 16.4 C13.6 15.8 12.2 14 12 12.6 C12.4 12 13.4 11.6 13 10.6 L11.6 8.4 C11 7.6 10.2 7.6 9.6 8Z" fill="#fff"/>
<path d="M15.4 7 C19.6 7.2 22 9.8 22 13.6 M15.8 9.4 C18.4 9.6 19.6 11.2 19.8 13.4" fill="none" stroke="#fff" stroke-width="1.1" stroke-linecap="round"/></svg>
<div class="a" style="left:1334px;top:1039px;width:30px;height:21.4px;border-radius:5.5px;background:#ff0000"></div>
<svg style="left:1344px;top:1044px" width="12" height="12" viewBox="0 0 12 12"><path d="M2.6 1.2 L10.2 5.7 L2.6 10.2Z" fill="#fff"/></svg>
<svg style="left:1591px;top:1044px" width="16" height="11" viewBox="0 0 16 11" fill="none" stroke="#1a1a1a" stroke-width="1.5" stroke-linecap="round" stroke-linejoin="round"><path d="M1.6 9 L8 2.6 L14.4 9"/></svg>
<svg style="left:1631px;top:1039px" width="16" height="22" viewBox="0 0 16 22" fill="none" stroke="#2a7c8c" stroke-width="1.4" stroke-linecap="round"><rect x="5" y="1.4" width="6" height="11.6" rx="3"/><path d="M1.6 10.4 Q2 16.4 8 16.4 Q14 16.4 14.4 10.4 M8 16.6 V20.4"/></svg>
<svg style="left:1723px;top:1040px" width="22" height="18" viewBox="0 0 22 18" fill="none" stroke="#1a1a1a" stroke-width="1.5" stroke-linecap="round"><path d="M1.6 7 Q11 -1.6 20.4 7"/><path d="M4.8 10.2 Q11 4.6 17.2 10.2"/><path d="M8 13.2 Q11 10.6 14 13.2"/><circle cx="11" cy="15.6" r="1.1" fill="#1a1a1a" stroke="none"/></svg>
<svg style="left:1753px;top:1040px" width="22" height="18" viewBox="0 0 22 18" fill="none" stroke="#1a1a1a" stroke-width="1.3" stroke-linecap="round" stroke-linejoin="round"><path d="M1.2 6.4 H4 L8.4 2.2 V15.8 L4 11.6 H1.2Z"/><path d="M11.4 6.2 Q13.2 9 11.4 11.8"/><path d="M14.2 4.2 Q17.2 9 14.2 13.8"/><path d="M17 2.2 Q21.2 9 17 15.8"/></svg>
<svg style="left:1783px;top:1039px" width="22" height="18" viewBox="0 0 22 18"><rect x="2.2" y="5.2" width="16.6" height="10.4" rx="2.6" fill="none" stroke="#1a1a1a" stroke-width="1.4"/><rect x="19.2" y="8.4" width="1.8" height="4" rx="0.9" fill="#1a1a1a"/><path d="M7.4 7.4 H16.2 Q17 7.4 17 8.2 V12.6 Q17 13.4 16.2 13.4 H4.6Z" fill="#1a1a1a"/><path d="M4.6 0.8 L1.2 6.8 H3.6 L2.6 10.8 L6.6 4.8 H4 Z" fill="#1a1a1a" stroke="#ecd8d8" stroke-width="0.8"/></svg>
<div class="a" style="left:1912px;top:1040px;width:1px;height:19.5px;background:#8b8587"></div>
<span class="t" id="t0" style="left:20.00px;top:11.00px;font-size:15.5px;color:#fff;letter-spacing:0.170px;-webkit-text-stroke:0.35px #fff;">zoom</span>
<span class="t" id="t1" style="left:20.30px;top:26.00px;font-size:21px;color:#fff;transform-origin:0 0;transform:scaleX(0.9511);-webkit-text-stroke:0.55px #fff;">Workplace</span>
<span class="t" id="t2" style="left:247.50px;top:24.00px;font-size:16px;color:#fff;transform-origin:0 0;transform:scaleX(0.9364);">Конференция</span>
<span class="t" id="t3" style="left:543.20px;top:28.00px;font-size:3.3px;color:#e4e4f6;transform-origin:0 0;transform:scaleX(0.7978);"><b>ФЕНОМЕН</b></span>
<span class="t" id="t4" style="left:543.80px;top:32.00px;font-size:3.2px;color:#e4e4f6;transform-origin:0 0;transform:scaleX(0.8671);"><b>POSITUM</b></span>
<span class="t" id="t5" style="left:571.50px;top:24.00px;font-size:16px;color:#fff;transform-origin:0 0;transform:scaleX(0.9208);">Экран (Ignat Belskyi)</span>
<span class="t" id="t6" style="left:347.00px;top:237.00px;font-size:31px;color:#1b1b1d;transform-origin:0 0;transform:scaleX(0.9777);--bs:0.3px #1b1b1d;"><b>П'ЯТИКРОКОВА МОДЕЛЬ</b></span>
<span class="t" id="t7" style="left:347.00px;top:271.00px;font-size:31px;color:#1b1b1d;transform-origin:0 0;transform:scaleX(0.9930);--bs:0.3px #1b1b1d;"><b>ПОЗИТИВНОЇ ПСИХОТЕРАПІЇ Н. ПЕЗЕШКІАНА</b></span>
<span class="t" id="t8" style="left:347.00px;top:325.00px;font-size:22px;color:#343438;letter-spacing:0.459px;--bc:#1b1b1d;--bs:0.22px #1b1b1d;"><b>5-етапний процес комунікації,</b> який використовується як в рамках</span>
<span class="t" id="t9" style="left:347.00px;top:348.00px;font-size:22px;color:#343438;letter-spacing:0.453px;--bc:#1b1b1d;--bs:0.22px #1b1b1d;">окремих сесій, так і впродовж усього курсу терапії.</span>
<span class="t" id="t10" style="left:378.60px;top:396.00px;font-size:22px;color:#343438;letter-spacing:-2.3px;transform:translateX(-100%);">1.</span>
<span class="t" id="t11" style="left:378.60px;top:444.00px;font-size:22px;color:#343438;letter-spacing:-1px;transform:translateX(-100%);">2.</span>
<span class="t" id="t12" style="left:378.60px;top:492.00px;font-size:22px;color:#343438;letter-spacing:-1px;transform:translateX(-100%);">3.</span>
<span class="t" id="t13" style="left:378.60px;top:540.00px;font-size:22px;color:#343438;letter-spacing:-1px;transform:translateX(-100%);">4.</span>
<span class="t" id="t14" style="left:378.60px;top:564.00px;font-size:22px;color:#343438;letter-spacing:-1px;transform:translateX(-100%);">5.</span>
<span class="t" id="t15" style="left:381.00px;top:396.00px;font-size:22px;color:#343438;letter-spacing:0.468px;--bc:#1b1b1d;--bs:0.22px #1b1b1d;"><b>Перший крок</b> - це прийняття, <b>спостереження та</b></span>
<span class="t" id="t16" style="left:381.00px;top:420.00px;font-size:22px;color:#343438;letter-spacing:0.424px;--bc:#1b1b1d;--bs:0.22px #1b1b1d;"><b>дистанціювання,</b> що передбачає зміну перспективи.</span>
<span class="t" id="t17" style="left:381.00px;top:444.00px;font-size:22px;color:#343438;letter-spacing:0.260px;--bc:#1b1b1d;--bs:0.22px #1b1b1d;"><b>Другий крок</b> - <b>інвентаризація, диференціація змісту та</b></span>
<span class="t" id="t18" style="left:381.00px;top:468.00px;font-size:22px;color:#343438;letter-spacing:0.219px;--bc:#1b1b1d;--bs:0.22px #1b1b1d;"><b>передумов конфлікту, а також сильних сторін</b> пацієнта.</span>
<span class="t" id="t19" style="left:381.00px;top:492.00px;font-size:22px;color:#343438;letter-spacing:0.335px;--bc:#1b1b1d;--bs:0.22px #1b1b1d;"><b>Третій крок</b> - <b>ситуативне схвалення,</b> де розвиваються навички</span>
<span class="t" id="t20" style="left:381.00px;top:516.00px;font-size:22px;color:#343438;letter-spacing:0.461px;--bc:#1b1b1d;--bs:0.22px #1b1b1d;">самодопомоги та ресурси.</span>
<span class="t" id="t21" style="left:381.00px;top:540.00px;font-size:22px;color:#343438;letter-spacing:0.294px;--bc:#1b1b1d;--bs:0.22px #1b1b1d;"><b>Четвертий крок</b> - <b>опрацювання конфлікту</b> через вербалізацію.</span>
<span class="t" id="t22" style="left:381.00px;top:564.00px;font-size:22px;color:#343438;letter-spacing:0.411px;--bc:#1b1b1d;--bs:0.22px #1b1b1d;"><b>П'ятий</b> і останній крок, який називається <b>розширенням цілей,</b></span>
<span class="t" id="t23" style="left:381.00px;top:588.00px;font-size:22px;color:#343438;letter-spacing:0.278px;--bc:#1b1b1d;--bs:0.22px #1b1b1d;">передбачає обдумування, узагальнення та <b>тестування нових</b></span>
<span class="t" id="t24" style="left:381.00px;top:611.00px;font-size:22px;color:#343438;letter-spacing:0.310px;--bc:#1b1b1d;--bs:0.22px #1b1b1d;"><b>концепцій,</b> стратегій і перспектив, <b>орієнтованих на майбутнє.</b></span>
<span class="t" id="t25" style="left:347.00px;top:659.00px;font-size:22px;color:#1b1b1d;letter-spacing:0.189px;--bc:#1b1b1d;--bs:0.22px #1b1b1d;"><b>Такий підхід до структурованої комунікації є унікальним для</b></span>
<span class="t" id="t26" style="left:347.00px;top:683.00px;font-size:22px;color:#1b1b1d;letter-spacing:0.275px;--bc:#1b1b1d;--bs:0.22px #1b1b1d;"><b>методу Пезешкіана і сприяє успішним результатам терапії.</b></span>
<span class="t" id="t27" style="left:347.00px;top:707.00px;font-size:22px;color:#343438;letter-spacing:0.434px;--bc:#1b1b1d;--bs:0.22px #1b1b1d;">Цей терапевтичний <b>процес зосереджений на майбутньому та</b></span>
<span class="t" id="t28" style="left:347.00px;top:731.00px;font-size:22px;color:#1b1b1d;letter-spacing:0.282px;--bc:#1b1b1d;--bs:0.22px #1b1b1d;"><b>змінах і передбачає використання концепцій з минулого, які є</b></span>
<span class="t" id="t29" style="left:347.00px;top:755.00px;font-size:22px;color:#1b1b1d;letter-spacing:0.120px;--bc:#1b1b1d;--bs:0.22px #1b1b1d;"><b>ефективними для сьогодення.</b></span>
<span class="t" id="t30" style="left:62.30px;top:793.48px;font-size:16.5px;color:#2b2b2e;transform-origin:0 85%;letter-spacing:0.731px;transform:rotate(-90deg);">Базовий курс позитивної психотерапії I Year 2024</span>
<span class="t" id="t31" style="left:90.50px;top:788.80px;font-size:22px;color:#222;transform-origin:0 85%;letter-spacing:0.496px;transform:rotate(-90deg);">fenomenpositum.com</span>
<span class="t" id="t32" style="left:1291.40px;top:172.00px;font-size:55.5px;color:#fbfbfb;transform:scaleX(0.96);transform-origin:0 0;">K</span>
<span class="t" id="t33" style="left:1233.70px;top:240.00px;font-size:15.8px;color:#fff;transform-origin:0 0;transform:scaleX(0.9652);">Kateryna Baturevich</span>
<span class="t" id="t34" style="left:1233.80px;top:364.00px;font-size:15.8px;color:#fff;transform-origin:0 0;transform:scaleX(0.9422);">Olena Charkina, Kryvyi Ri...</span>
<span class="t" id="t35" style="left:1233.80px;top:488.00px;font-size:15.8px;color:#fff;transform-origin:0 0;transform:scaleX(0.9580);">Ignat Belskyi</span>
<span class="t" id="t36" style="left:1210.50px;top:612.00px;font-size:15.8px;color:#fff;transform-origin:0 0;transform:scaleX(0.9951);">Аліна Кондратюк</span>
<span class="t" id="t37" style="left:1233.80px;top:735.00px;font-size:15.8px;color:#fff;transform-origin:0 0;transform:scaleX(0.9768);">Катерина Матковська</span>
<span class="t" id="t38" style="left:1233.80px;top:859.00px;font-size:15.8px;color:#fff;transform-origin:0 0;transform:scaleX(0.9756);">Олександра Олійник</span>
<span class="t" id="t39" style="left:1600.00px;top:86.00px;font-size:16.5px;color:#1a1a1c;transform-origin:0 0;transform:scaleX(0.9813);"><b>Участники (14)</b></span>
<span class="t" id="t40" style="left:1532.60px;top:147.00px;font-size:15.5px;color:#6e7680;transform-origin:0 0;transform:scaleX(0.9934);">Найти участника</span>
<span class="t" id="t41" style="left:1549.50px;top:197.00px;font-size:16px;color:#1c1c28;transform-origin:0 0;transform:scaleX(0.9347);">Olena Charkina, Kryv...</span>
<span class="t" id="t42" style="left:1549.50px;top:248.00px;font-size:16px;color:#1c1c28;transform-origin:0 0;transform:scaleX(0.9535);">Ignat Belskyi</span>
<span class="t" id="t43" style="left:1549.50px;top:299.00px;font-size:16px;color:#1c1c28;transform-origin:0 0;transform:scaleX(0.9809);">Аліна Кондратюк</span>
<span class="t" id="t44" style="left:1549.50px;top:350.00px;font-size:16px;color:#1c1c28;transform-origin:0 0;transform:scaleX(0.9543);">Kateryna Baturevich</span>
<span class="t" id="t45" style="left:1549.50px;top:401.00px;font-size:16px;color:#1c1c28;transform-origin:0 0;transform:scaleX(0.9601);">Аліна Лямпрехт</span>
<span class="t" id="t46" style="left:1549.50px;top:452.00px;font-size:16px;color:#1c1c28;transform-origin:0 0;transform:scaleX(0.9647);">Валерія Марчук</span>
<span class="t" id="t47" style="left:1549.50px;top:503.00px;font-size:16px;color:#1c1c28;transform-origin:0 0;transform:scaleX(0.9604);">Егор Русначенко</span>
<span class="t" id="t48" style="left:1549.50px;top:554.00px;font-size:16px;color:#1c1c28;transform-origin:0 0;transform:scaleX(0.9561);">Ірина Вишивана</span>
<span class="t" id="t49" style="left:1549.50px;top:605.00px;font-size:16px;color:#1c1c28;transform-origin:0 0;transform:scaleX(0.9701);">Катерина Матковська</span>
<span class="t" id="t50" style="left:1549.50px;top:656.00px;font-size:16px;color:#1c1c28;transform-origin:0 0;transform:scaleX(0.9633);">Колесник Анна</span>
<span class="t" id="t51" style="left:1549.50px;top:707.00px;font-size:16px;color:#1c1c28;transform-origin:0 0;transform:scaleX(0.9741);">Марина Іващенко</span>
<span class="t" id="t52" style="left:1549.50px;top:758.00px;font-size:16px;color:#1c1c28;transform-origin:0 0;transform:scaleX(0.9652);">Олександра Олійник</span>
<span class="t" id="t53" style="left:1549.50px;top:809.00px;font-size:16px;color:#1c1c28;transform-origin:0 0;transform:scaleX(0.9447);">Романова Анастасія</span>
<span class="t" id="t54" style="left:1549.50px;top:860.00px;font-size:16px;color:#1c1c28;transform-origin:0 0;transform:scaleX(0.9740);">Чернова Марія</span>
<span class="t" id="t55" style="left:1715.00px;top:197.00px;font-size:16px;color:#1c1c28;transform-origin:0 0;transform:scaleX(0.9588);">(Организатор, я)</span>
<span class="t" id="t56" style="left:1505.60px;top:249.00px;font-size:5.6px;color:#f4f4fb;transform-origin:0 0;transform:scaleX(0.8729);"><b>ФЕНОМЕН</b></span>
<span class="t" id="t57" style="left:1506.80px;top:256.00px;font-size:5.4px;color:#f4f4fb;transform-origin:0 0;transform:scaleX(0.9527);"><b>POSITUM</b></span>
<span class="t" id="t58" style="left:1510.60px;top:346.00px;font-size:21.5px;color:#fff;">K</span>
<span class="t" id="t59" style="left:1512.80px;top:451.00px;font-size:15.5px;color:#fff;"><b>В</b></span>
<span class="t" id="t60" style="left:1511.50px;top:499.00px;font-size:21.5px;color:#fff;">Г</span>
<span class="t" id="t61" style="left:1512.70px;top:655.00px;font-size:15.5px;color:#fff;"><b>К</b></span>
<span class="t" id="t62" style="left:1510.30px;top:706.00px;font-size:15.5px;color:#fff;"><b>М</b></span>
<span class="t" id="t63" style="left:1511.50px;top:757.00px;font-size:15.5px;color:#fff;"><b>О</b></span>
<span class="t" id="t64" style="left:1512.40px;top:859.00px;font-size:15.5px;color:#fff;"><b>Ч</b></span>
<span class="t" id="t65" style="left:1510.50px;top:970.00px;font-size:15.5px;color:#1c1c28;transform-origin:0 0;transform:scaleX(0.9761);">Пригласить</span>
<span class="t" id="t66" style="left:1643.50px;top:970.00px;font-size:15.5px;color:#1c1c28;transform-origin:0 0;transform:scaleX(0.9818);clip-path:inset(0 3.4px 0 0);">Выключить зв</span>
<span class="t" id="t67" style="left:1750.30px;top:978.00px;font-size:15.6px;color:#1b1b1b;transform-origin:0 0;transform:scaleX(0.9602);">Показати робочий стіл</span>
<span class="t" id="t68" style="left:64.50px;top:1033.00px;font-size:15.2px;color:#1f1f1f;transform-origin:0 0;transform:scaleX(0.8076);">11°C</span>
<span class="t" id="t69" style="left:64.50px;top:1053.00px;font-size:15.2px;color:#4c4c4e;letter-spacing:0.119px;">Mostly cloudy</span>
<span class="t" id="t70" style="left:649.50px;top:1044.00px;font-size:16.5px;color:#4a4a4a;letter-spacing:0.833px;">Пошук</span>
<span class="t" id="t71" style="left:1118.60px;top:1046.00px;font-size:9.2px;color:#fff;transform-origin:0 0;transform:scaleX(0.8917);"><b>zoom</b></span>
<span class="t" id="t72" style="left:1672.30px;top:1033.00px;font-size:15px;color:#1f1f1f;transform-origin:0 0;transform:scaleX(0.8704);">ENG</span>
<span class="t" id="t73" style="left:1672.30px;top:1054.00px;font-size:15px;color:#1f1f1f;transform-origin:0 0;transform:scaleX(0.8950);">INTL</span>
<span class="t" id="t74" style="left:1862.30px;top:1033.00px;font-size:15px;color:#1f1f1f;transform-origin:0 0;transform:scaleX(0.8709);">10:13</span>
<span class="t" id="t75" style="left:1826.40px;top:1053.00px;font-size:15px;color:#1f1f1f;transform-origin:0 0;transform:scaleX(0.9274);">17.11.2025</span>
</body></html>
